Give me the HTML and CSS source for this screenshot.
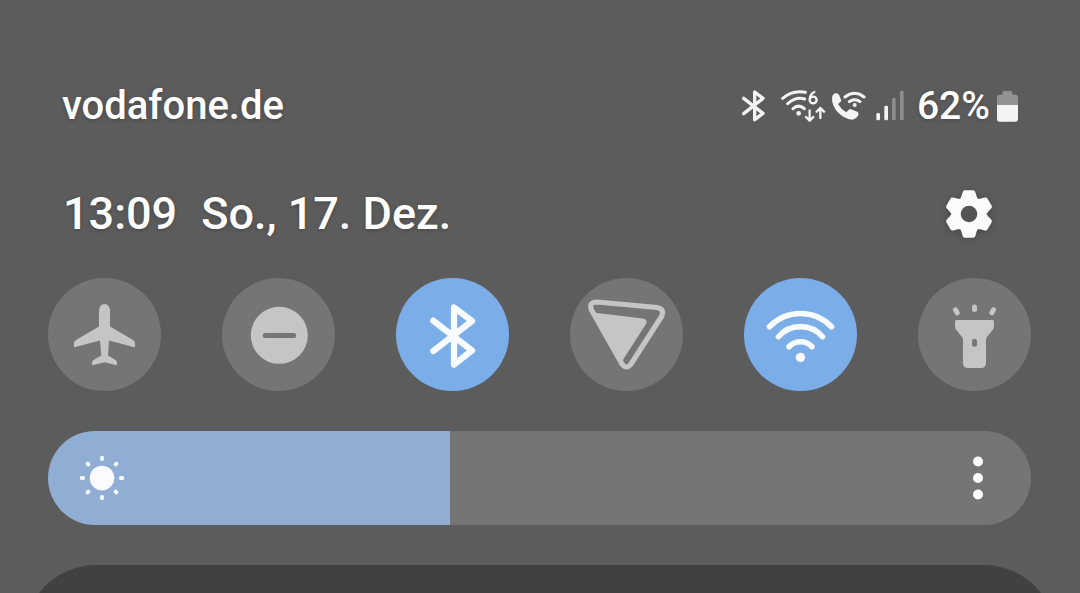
FILE: index.html
```html
<!DOCTYPE html>
<html lang="de">
<head>
<meta charset="utf-8">
<meta name="viewport" content="width=device-width, initial-scale=1">
<title>Schnelleinstellungen</title>
<link rel="stylesheet" href="styles.css">
</head>
<body>
<header class="status">
  <span class="carrier">vodafone.de</span>
  <div class="indicators">
    <svg class="ind-bluetooth" viewBox="33 30 75 96" role="img" aria-label="Bluetooth"><path d="M41 55 L99 100 L74 119 V36 L99 55 L41 101" fill="none" stroke="#f4f4f4" stroke-width="10" stroke-linecap="round" stroke-linejoin="round"/></svg>
    <svg class="ind-wifi" viewBox="153 30 135 96" role="img" aria-label="WLAN 6">
      <g fill="none" stroke="#f4f4f4" stroke-width="9" stroke-linecap="round" stroke-linejoin="round">
        <path d="M158 55 Q188 29 226 37"/><path d="M173 71 Q198 49 224 57"/><path d="M189 86 Q206 71 223 86"/>
        <path d="M253 36 Q241 42 239 56 M239 60 a10.500 10 0 1 0 21 0 a10.500 10 0 1 0 -21 0" stroke-width="7"/>
        <path d="M239 91 V121 M228 111 L239 122 L250 111 M271 114 V84 M260 95 L271 84 L282 95" stroke-width="7"/>
      </g>
      <circle cx="206" cy="100" r="7" fill="#f4f4f4"/>
    </svg>
    <svg class="ind-call" viewBox="303 30 105 96" role="img" aria-label="WLAN-Anrufe">
      <path d="M308 46 Q313 38 320 40 L326 43 L334 61 Q334 66 324 72 Q333 88 349 97 Q356 88 361 87 L382 95 Q387 98 385 105 Q378 118 366 119 Q343 117 322 95 Q306 76 306 56 Q306 50 308 46Z" fill="#f4f4f4"/>
      <path d="M345 51 Q374 29 402 51 M358 65 Q374 53 390 65" fill="none" stroke="#f4f4f4" stroke-width="9" stroke-linecap="round"/>
      <circle cx="374" cy="75" r="6" fill="#f4f4f4"/>
    </svg>
    <svg class="ind-signal" viewBox="15 30 90 96" role="img" aria-label="Signalstärke 2 von 4"><g fill="#f4f4f4"><rect x="19" y="99" width="11" height="22" rx="4"/><rect x="43" y="77" width="11" height="44" rx="4"/></g><g fill="#8d8d8d"><rect x="66" y="54" width="11" height="67" rx="4"/><rect x="90" y="32" width="11" height="89" rx="4"/></g></svg>
    <span class="percent">62%</span>
    <svg class="ind-battery" viewBox="378 30 69 96" role="img" aria-label="Akku"><path d="M381 76 V51 Q381 44 388 44 H397 V39 Q397 33 403 33 H421 Q427 33 427 39 V44 H437 Q444 44 444 51 V76Z" fill="#929292"/><path d="M381 75 H444 V117 Q444 125 436 125 H389 Q381 125 381 117Z" fill="#f4f4f4"/></svg>
  </div>
</header>
<main>
  <div class="clock-row">
    <div class="clock"><time>13:09</time><span>So., 17. Dez.</span></div>
    <button class="settings" type="button" aria-label="Einstellungen">
      <svg viewBox="-24 -24 48 48">
        <defs><path id="tooth" d="M-4 -22.500 H4 Q5 -22.500 5.200 -21.500 L6.500 -17 Q7 -15.500 8 -14 H-8 Q-7 -15.500 -6.500 -17 L-5.200 -21.500 Q-5 -22.500 -4 -22.500Z"/></defs>
        <g fill="#fbfbfb" stroke="#fbfbfb" stroke-width="2.500" stroke-linejoin="round"><circle r="15.500"/><use href="#tooth"/><use href="#tooth" transform="rotate(60)"/><use href="#tooth" transform="rotate(120)"/><use href="#tooth" transform="rotate(180)"/><use href="#tooth" transform="rotate(240)"/><use href="#tooth" transform="rotate(300)"/></g>
        <circle r="8.300" fill="#545454"/>
      </svg>
    </button>
  </div>
  <div class="toggles">
    <button class="toggle" type="button" aria-pressed="false" aria-label="Flugmodus"><svg viewBox="0 0 113 113"><path d="M51 34 Q51 26 56.500 26 Q62 26 62 34 V48.500 L85 62 Q87 63.300 87 65 V68 Q87 69.500 85.500 69 L61 62.500 L60 77.500 L67.500 82 Q69 83 69 84.500 V86 Q69 87.500 67.500 87 L56.500 84.300 L45.500 87 Q44 87.500 44 86 V84.500 Q44 83 45.500 82 L53.300 77.500 L52 62.500 L27.500 69 Q26 69.500 26 68 V65 Q26 63.300 28 62 L51 48.500Z" fill="#c5c5c5"/></svg></button>
    <button class="toggle" type="button" aria-pressed="false" aria-label="Nicht stören"><svg viewBox="0 0 113 113"><circle cx="57.300" cy="57.300" r="28.500" fill="#c5c5c5"/><rect x="40.700" y="55" width="33.500" height="5" rx="2.500" fill="#757575"/></svg></button>
    <button class="toggle on" type="button" aria-pressed="true" aria-label="Bluetooth"><svg viewBox="0 0 113 113"><path d="M37.300 42.700 L76 72.500 L58 86.500 V29.500 L76 43 L37.300 73" fill="none" stroke="#f8fbff" stroke-width="6.300" stroke-linecap="round" stroke-linejoin="round"/></svg></button>
    <button class="toggle" type="button" aria-pressed="false" aria-label="VPN"><svg viewBox="0 0 113 113"><path d="M27 24 L87 29.500 Q95 31 91.500 38.500 L61 86 Q56.500 92 52 86 L21.500 32 Q18.500 24 27 24Z" fill="none" stroke="#c5c5c5" stroke-width="5.200" stroke-linejoin="round"/><path d="M22 33 Q24 34.500 27 35 L73 40.500 Q78 41.500 76 46 L53.500 81 Q51.500 85 53 88Z" fill="#c5c5c5"/></svg></button>
    <button class="toggle on" type="button" aria-pressed="true" aria-label="WLAN"><svg viewBox="0 0 113 113"><g fill="none" stroke="#f8fbff" stroke-width="5.600" stroke-linecap="round"><path d="M25.500 48.700 A43 43 0 0 1 87.500 48.700"/><path d="M34.500 58.700 A29 29 0 0 1 78.500 58.700"/><path d="M45 68.700 A16 16 0 0 1 68 68.700"/></g><circle cx="56.500" cy="79.500" r="4.700" fill="#f8fbff"/></svg></button>
    <button class="toggle" type="button" aria-pressed="false" aria-label="Taschenlampe"><svg viewBox="0 0 113 113"><g fill="none" stroke="#c5c5c5" stroke-width="5" stroke-linecap="round"><path d="M56.500 29 V31.500 M37.500 31.800 L39.200 34.800 M75.500 31.800 L73.800 34.800"/></g><path d="M38.500 42 H74.500 Q76 42 76 43.500 V48 Q76 50 75 51.500 L69 59 Q68 60.500 68 62 V85 Q68 90 63 90 H50 Q45 90 45 85 V62 Q45 60.500 44 59 L38 51.500 Q37 50 37 48 V43.500 Q37 42 38.500 42Z" fill="#c5c5c5"/><rect x="54" y="60.700" width="5" height="8" rx="2.500" fill="#757575"/></svg></button>
  </div>
  <div class="brightness">
    <input class="range" type="range" min="0" max="1000" value="409" aria-label="Helligkeit">
    <svg class="sun" viewBox="-24 -24 48 48" aria-hidden="true"><circle r="12.300" fill="#fafaff"/><g fill="none" stroke="#f8fbff" stroke-width="4" stroke-linecap="round"><path d="M0 -20.300V-19 M0 20.300V19 M-20.300 0H-19 M20.300 0H19 M-14.400 -14.400L-13.600 -13.600 M14.400 -14.400L13.600 -13.600 M-14.400 14.400L-13.600 13.600 M14.400 14.400L13.600 13.600"/></g></svg>
    <button class="more" type="button" aria-label="Weitere Optionen"><svg viewBox="-24 -24 48 48"><g fill="#fff"><circle cy="-16.500" r="5"/><circle r="5"/><circle cy="16.500" r="5"/></g></svg></button>
  </div>
</main>
<section class="notifications" aria-label="Benachrichtigungen"></section>
</body>
</html>
```
FILE: styles.css
```css
* {
  box-sizing: border-box;
}

body {
  margin: 0;
  height: 100vh;
  display: flex;
  flex-direction: column;
  overflow: hidden;
  background: #5c5c5c;
  color: #fff;
  font-family: Roboto, "Liberation Sans", sans-serif;
  font-weight: 500;
}

button {
  padding: 0;
  border: 0;
  background: none;
  color: inherit;
  font: inherit;
}

svg {
  display: block;
}

.status,
.clock-row {
  display: flex;
  align-items: center;
  justify-content: space-between;
}

.status {
  padding: 82px 61px 0 62px;
  font-size: 40px;
  line-height: 48px;
  text-shadow: 0 1px 4px rgba(0, 0, 0, 0.25);
}

.indicators {
  display: flex;
  align-items: center;
}

.indicators svg {
  height: 32px;
}

.ind-bluetooth {
  width: 25px;
  margin-right: 15px;
}

.ind-wifi {
  width: 45px;
  margin-right: 5px;
}

.ind-call {
  width: 35px;
  margin-right: 9px;
}

.ind-signal {
  width: 30px;
  margin-right: 12px;
}

.percent {
  font-size: 39px;
}

.ind-battery {
  width: 23px;
  margin-left: 6px;
}

main {
  padding: 56px 49px 40px 48px;
}

.clock-row {
  padding: 0 38px 0 15px;
  font-size: 45px;
  line-height: 56px;
  text-shadow: 0 1px 4px rgba(0, 0, 0, 0.25);
}

.clock {
  display: flex;
  gap: 24px;
}

.settings svg {
  width: 48px;
  height: 48px;
  filter: drop-shadow(0 1px 3px rgba(0, 0, 0, 0.25));
}

.toggles {
  display: flex;
  justify-content: space-between;
  margin-top: 36px;
}

.toggle {
  width: 113px;
  height: 113px;
  border-radius: 50%;
  background: #757575;
}

.toggle.on {
  background: #7baee8;
}

.brightness {
  display: grid;
  grid-template-columns: 1fr 1fr;
  align-items: center;
  margin-top: 40px;
}

.range {
  grid-area: 1 / 1 / 2 / 3;
  appearance: none;
  width: 100%;
  height: 94px;
  margin: 0;
  border-radius: 47px;
  background: linear-gradient(to right, #90add3 40.9%, #757575 40.9%);
}

.range::-webkit-slider-thumb {
  appearance: none;
  width: 2px;
  height: 94px;
  background: transparent;
}

.sun,
.more svg {
  width: 48px;
  height: 48px;
}

.sun {
  grid-area: 1 / 1;
  margin-left: 30px;
  pointer-events: none;
}

.more {
  grid-area: 1 / 2;
  justify-self: end;
  margin-right: 29px;
}

.notifications {
  flex: 1 0 120px;
  margin: 0 24px;
  border-radius: 72px 72px 0 0;
  background: #414141;
}
```
